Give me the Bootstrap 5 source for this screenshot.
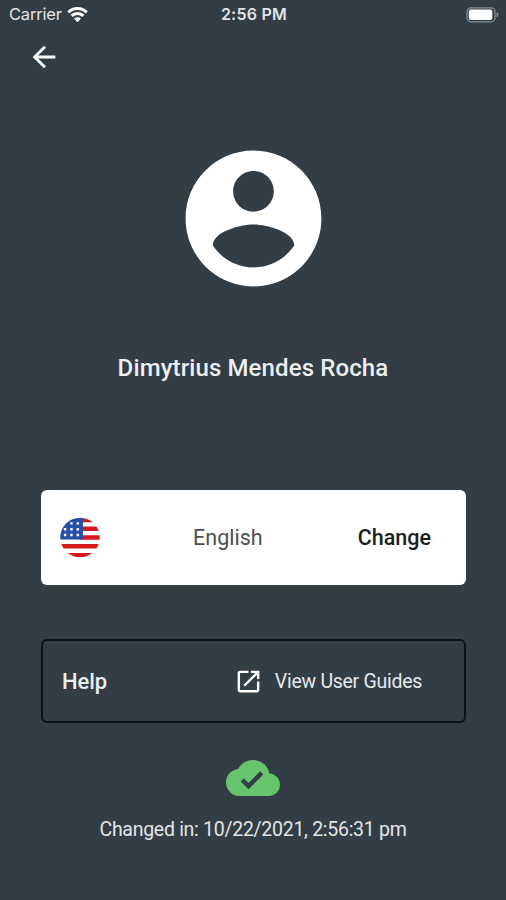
<!DOCTYPE html>
<html lang="en">
<head>
<meta charset="utf-8">
<meta name="viewport" content="width=device-width, initial-scale=1">
<title>Profile</title>
<link href="https://cdn.jsdelivr.net/npm/bootstrap@5.3.0/dist/css/bootstrap.min.css" rel="stylesheet">
<style>
body{background:#333d45;color:#eceef0;font-family:Roboto,"Liberation Sans",sans-serif;overflow:hidden}
svg{display:block;flex:none}
.screen{height:900px}
.status{height:29px;font-family:Inter,"Liberation Sans",sans-serif;font-size:16.5px;padding:0 7px 0 9px;color:#e0e4e6}
.carrier{letter-spacing:-.2px;margin-right:5px}
.clock{font-weight:600;font-size:16px;letter-spacing:.25px;line-height:22px;padding-bottom:1px}
.back{height:56px;padding:11px 0 0 27px}
.avatar{margin-top:52px}
.person{font-size:24px;font-weight:500;line-height:32px;letter-spacing:.12px;margin-top:52px}
.panel{margin:0 40px 0 41px;border-radius:6px}
.language{height:95px;margin-top:106px;color:#1b1e20;padding:0 35px 0 19px}
.lang-name{color:#4d5052;font-size:21.5px;padding:2px 2px 0 0}
.change{color:#1b1e20;font-size:21.5px;font-weight:500;padding-top:2px}
.help{height:84px;margin-top:54px;border:2px solid #0b1218;padding:0 42px 0 19px}
.help-title{font-size:22px;font-weight:500;letter-spacing:-.1px}
.guides{font-size:19.5px;letter-spacing:-.28px;color:#e6e8ea}
.guides-label{padding-top:2px}
.sync{margin-top:28px}
.changed{font-size:19.5px;letter-spacing:-.28px;line-height:28px;margin-top:11px;color:#e2e5e7}
</style>
<script src="https://cdn.jsdelivr.net/npm/bootstrap@5.3.0/dist/js/bootstrap.bundle.min.js"></script>
</head>
<body>
<main class="screen d-flex flex-column">
  <header class="status row g-0 align-items-center">
    <div class="col d-flex align-items-center"><span class="carrier">Carrier</span>
      <svg width="21" height="17" viewBox="0 0 22 17" fill="none" stroke="#fff" stroke-width="3.3"><path d="M1.4 6.2a13.6 13.6 0 0 1 19.2 0M4.9 10a8.6 8.6 0 0 1 12.2 0"/><path d="M11 16.5 7.4 12.8a5 5 0 0 1 7.2 0z" fill="#fff" stroke="none"/></svg>
    </div>
    <div class="col-auto clock">2:56 PM</div>
    <div class="col d-flex justify-content-end">
      <svg width="33" height="16" viewBox="0 0 33 16"><rect x="1" y=".8" width="28" height="14" rx="4" fill="none" stroke="#858c91" stroke-width="1.3"/><rect x="2.8" y="2.6" width="23.5" height="10.4" rx="2" fill="#fff"/><path d="M30.5 5v5.5q2-1 2-2.75T30.5 5z" fill="#858c91"/></svg>
    </div>
  </header>
  <nav class="back"><a href="#" aria-label="Back" class="d-inline-block">
    <svg width="34" height="34" viewBox="0 0 24 24" fill="#fff"><path d="M20 11H7.83l5.59-5.59L12 4l-8 8 8 8 1.41-1.41L7.83 13H20v-2z"/></svg></a></nav>
  <section class="avatar d-flex justify-content-center">
    <svg width="163" height="163" viewBox="0 0 24 24" fill="#fff"><path d="M12 2C6.48 2 2 6.48 2 12s4.48 10 10 10 10-4.48 10-10S17.52 2 12 2zm0 3c1.66 0 3 1.34 3 3s-1.34 3-3 3-3-1.34-3-3 1.34-3 3-3zm0 14.2c-2.5 0-4.71-1.28-6-3.22.03-1.99 4-3.08 6-3.08 1.99 0 5.97 1.09 6 3.08-1.29 1.94-3.5 3.22-6 3.22z"/></svg>
  </section>
  <h1 class="person text-center mb-0">Dimytrius Mendes Rocha</h1>
  <section class="panel language bg-white d-flex align-items-center justify-content-between">
    <svg width="40" height="41" viewBox="0 0 41 41"><defs><clipPath id="disc"><circle cx="20.5" cy="20.5" r="20.3"/></clipPath></defs>
      <g clip-path="url(#disc)"><path fill="#fff" d="M0 0h41v41H0z"/><path fill="#d81920" d="M20 0h21v4.8H20zM20 9.3h21v4.5H20zM20 18.2h21v4.5H20zM0 27.2h41v4.6H0zM0 36.3h41V41H0z"/><path fill="#2450a8" d="M0 0h23.5v22.5H0z"/>
      <path stroke="#fff" stroke-width="2.5" stroke-dasharray="2.5 4" d="M10.5 6h11M4 12h18M4 18h18"/></g></svg>
    <span class="lang-name">English</span>
    <a href="#" class="change text-decoration-none">Change</a>
  </section>
  <section class="panel help d-flex align-items-center justify-content-between">
    <span class="help-title">Help</span>
    <a href="#" class="guides d-flex align-items-center text-decoration-none gap-2">
      <svg width="29" height="29" viewBox="0 0 24 24" fill="#fff"><path d="M19 19H5V5h7V3H5a2 2 0 0 0-2 2v14a2 2 0 0 0 2 2h14c1.1 0 2-.9 2-2v-7h-2v7zM14 3v2h3.59l-9.83 9.83 1.41 1.41L19 6.41V10h2V3h-7z"/></svg>
      <span class="guides-label ms-1">View User Guides</span></a>
  </section>
  <footer class="sync d-flex flex-column align-items-center">
    <svg width="54" height="54" viewBox="0 0 24 24" fill="#66c56c"><path d="M19.35 10.04C18.67 6.59 15.64 4 12 4 9.11 4 6.6 5.64 5.35 8.04 2.34 8.36 0 10.91 0 14c0 3.31 2.69 6 6 6h13c2.76 0 5-2.24 5-5 0-2.64-2.05-4.78-4.65-4.96zM10 17l-3.5-3.5 1.41-1.41L10 14.17 15.18 9l1.41 1.41L10 17z"/></svg>
    <div class="changed">Changed in: 10/22/2021, 2:56:31 pm</div>
  </footer>
</main>
</body>
</html>
